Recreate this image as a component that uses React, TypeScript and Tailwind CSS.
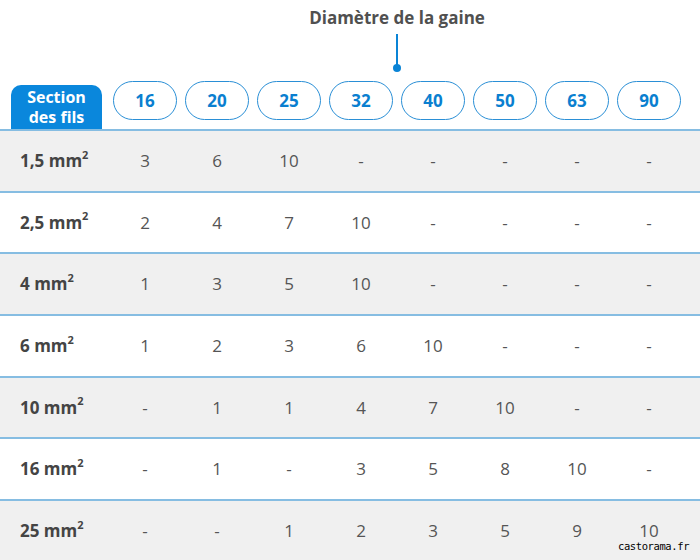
const diameters = ["16", "20", "25", "32", "40", "50", "63", "90"];

const rows = [
  { label: "1,5", values: ["3", "6", "10", "-", "-", "-", "-", "-"] },
  { label: "2,5", values: ["2", "4", "7", "10", "-", "-", "-", "-"] },
  { label: "4", values: ["1", "3", "5", "10", "-", "-", "-", "-"] },
  { label: "6", values: ["1", "2", "3", "6", "10", "-", "-", "-"] },
  { label: "10", values: ["-", "1", "1", "4", "7", "10", "-", "-"] },
  { label: "16", values: ["-", "1", "-", "3", "5", "8", "10", "-"] },
  { label: "25", values: ["-", "-", "1", "2", "3", "5", "9", "10"] },
];

export default function App() {
  return (
    <div className="relative w-[700px] h-[560px] overflow-hidden bg-white font-['Open_Sans',sans-serif]">
      {/* Title + pointer */}
      <div className="grid grid-cols-[109px_576px] h-[81px]">
        <div />
        <div className="flex flex-col items-center pt-[6px]">
          <div className="text-[17px] leading-[24px] font-bold text-[#505050]">Diamètre de la gaine</div>
          <div className="mt-[4px] w-[2px] h-[32px] bg-[#0a84d6]" />
          <div className="-mt-[2px] w-[8px] h-[8px] rounded-full bg-[#0a84d6]" />
        </div>
      </div>

      {/* Header */}
      <div className="grid grid-cols-[109px_repeat(8,72px)] h-[48px]">
        <div className="flex items-end pl-[11px]">
          <div className="w-[91px] h-[44px] rounded-t-[10px] bg-[#0a87dc] flex flex-col items-center justify-center text-white font-bold text-[16px] leading-[20px]">
            <span>Section</span>
            <span>des fils</span>
          </div>
        </div>
        {diameters.map((d) => (
          <div key={d} className="flex justify-center">
            <div className="w-[64px] h-[39px] rounded-full border border-[#2a8fd6] flex items-center justify-center text-[17px] font-bold text-[#0a7fd0]">
              {d}
            </div>
          </div>
        ))}
      </div>

      {/* Rows */}
      {rows.map((r, i) => (
        <div
          key={r.label}
          className={`grid grid-cols-[109px_repeat(8,72px)] h-[61.67px] box-border border-t-2 border-[#86bde2] ${
            i % 2 === 0 ? "bg-[#f0f0f0]" : "bg-white"
          }`}
        >
          <div className="flex items-center pl-[20px] text-[17px] font-bold text-[#444]">
            {r.label}&nbsp;mm<sup className="text-[11px] -top-[0.55em] font-bold">2</sup>
          </div>
          {r.values.map((v, j) => (
            <div key={j} className="flex items-center justify-center text-[17px] font-normal text-[#555]">
              {v}
            </div>
          ))}
        </div>
      ))}

      {/* watermark */}
      <div className="absolute left-[618px] top-[541px] text-[10.5px] leading-[11px] text-black font-['DejaVu_Sans_Mono',monospace] tracking-[-0.4px]">
        castorama.fr
      </div>
    </div>
  );
}
